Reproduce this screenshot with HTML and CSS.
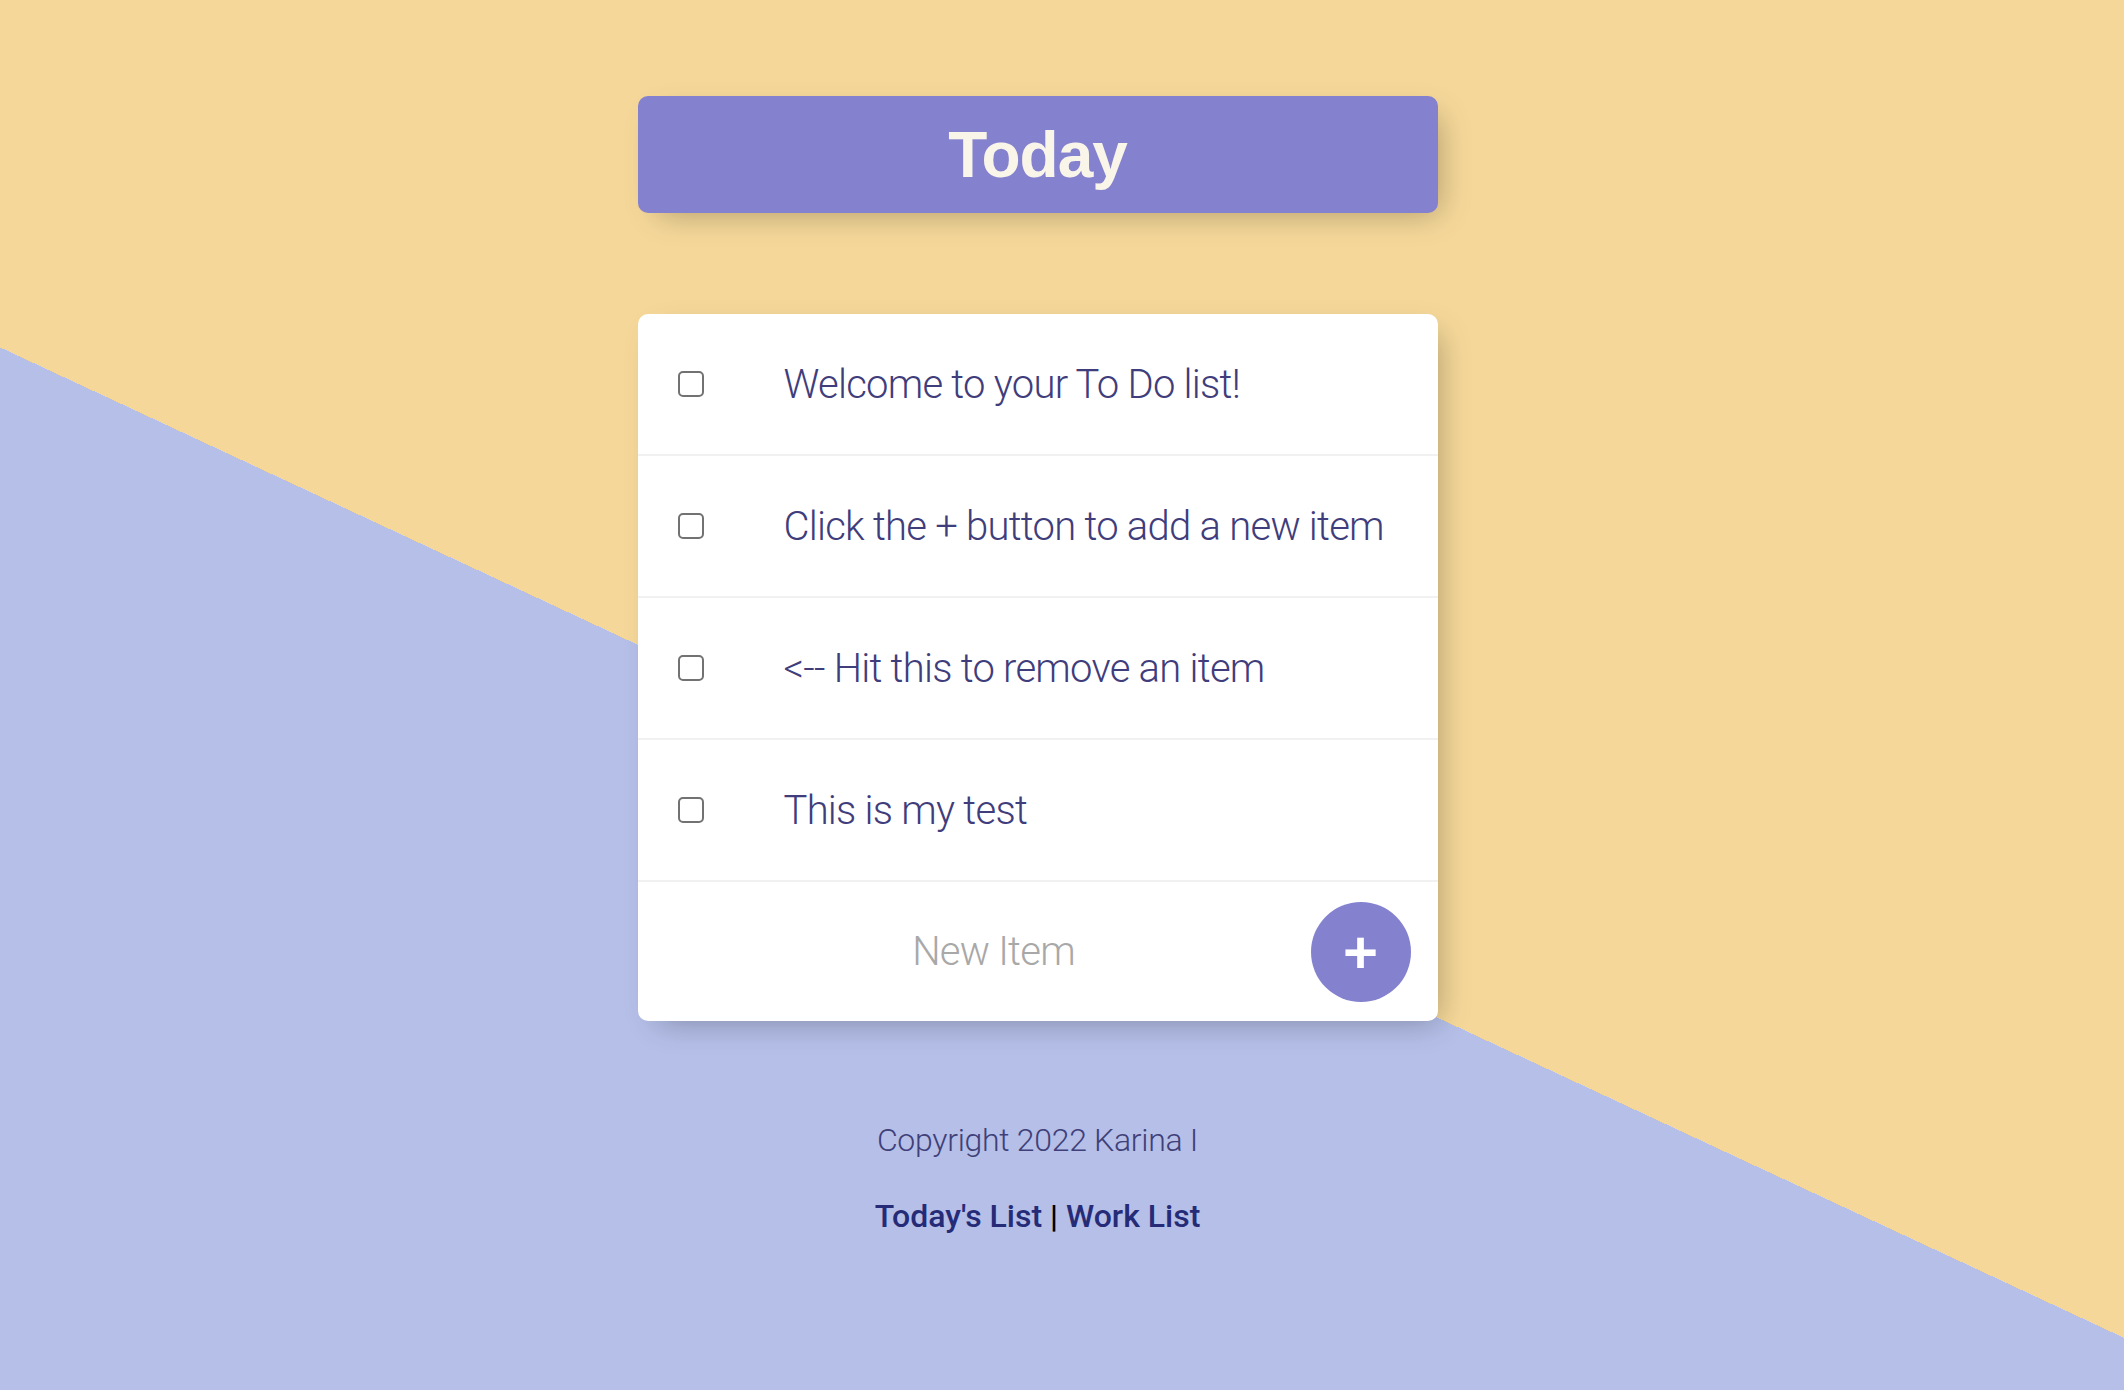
FILE: index.html
```html
<!DOCTYPE html>
<html lang="en">
<head>
<meta charset="utf-8">
<title>To Do List</title>
<link rel="stylesheet" href="styles.css">
</head>
<body>
<div class="page">
  <div class="box heading-box">
    <h1>Today</h1>
  </div>
  <div class="box card">
    <div class="item"><input type="checkbox" class="check"><p class="item-text">Welcome to your To Do list!</p></div>
    <div class="item"><input type="checkbox" class="check"><p class="item-text">Click the + button to add a new item</p></div>
    <div class="item"><input type="checkbox" class="check"><p class="item-text">&lt;-- Hit this to remove an item</p></div>
    <div class="item"><input type="checkbox" class="check"><p class="item-text">This is my test</p></div>
    <form class="new-item" action="#">
      <input type="text" class="new-input" name="newItem" placeholder="New Item" autocomplete="off">
      <button type="button" class="add-btn">+</button>
    </form>
  </div>
  <footer class="footer">
    <p class="copy">Copyright 2022 Karina I</p>
    <p class="links"><a href="#" class="link">Today's List</a> | <a href="#" class="link">Work List</a></p>
  </footer>
</div>
</body>
</html>
```
FILE: styles.css
```css
html, body {
  margin: 0;
  padding: 0;
}

body {
  font-family: Roboto, "Liberation Sans", Arial, sans-serif;
}

.page {
  min-height: 100vh;
  box-sizing: border-box;
  padding: 96px 49px 0 0;
  display: flex;
  flex-direction: column;
  align-items: center;
  background-color: #b5bfe8;
  background-image: linear-gradient(25deg, #b5bfe8 43.8%, #f5d899 43.8%);
}

.box {
  width: 800px;
  border-radius: 10px;
  box-shadow: 10px 10px 30px -10px rgba(0, 0, 0, 0.3);
}

.heading-box {
  height: 117px;
  background: #8481cf;
  display: flex;
  align-items: center;
  justify-content: center;
}

.heading-box h1 {
  margin: 0;
  font-family: "Liberation Sans", Arial, sans-serif;
  font-weight: 700;
  font-size: 64px;
  letter-spacing: -1px;
  color: #f9f5e9;
  line-height: 1;
}

.card {
  margin-top: 101px;
  background: #fff;
  overflow: hidden;
}

.item {
  height: 140px;
  display: flex;
  align-items: center;
  border-bottom: 2px solid #f1f1f1;
}

.check {
  appearance: none;
  -webkit-appearance: none;
  width: 26px;
  height: 26px;
  margin: 0 40px;
  box-sizing: border-box;
  border: 2px solid #727272;
  border-radius: 5px;
  background: #fff;
  flex: none;
}

.item-text {
  margin: 0;
  padding: 0 40px;
  font-size: 40px;
  font-weight: 300;
  letter-spacing: -0.75px;
  color: #3f3d7b;
  white-space: nowrap;
}

.new-item {
  height: 139px;
  display: flex;
  align-items: center;
  margin: 0;
}

.new-input {
  margin-left: 66px;
  width: 580px;
  height: 120px;
  border: none;
  padding: 0;
  text-align: center;
  font-family: Roboto, "Liberation Sans", Arial, sans-serif;
  font-size: 40px;
  font-weight: 300;
  letter-spacing: -0.75px;
  color: #3f3d7b;
  background: transparent;
  outline: none;
}

.new-input::placeholder {
  color: #a8a8a8;
  opacity: 1;
}

.add-btn {
  margin-left: 27px;
  width: 100px;
  height: 100px;
  border: 0;
  border-radius: 50%;
  background: #8481cf;
  color: #fff;
  font-family: "Liberation Sans", Arial, sans-serif;
  font-weight: 700;
  font-size: 60px;
  line-height: 1;
  padding: 2px 0 0;
  display: flex;
  align-items: center;
  justify-content: center;
  flex: none;
}

.footer {
  margin-top: 100px;
  text-align: center;
}

.copy {
  margin: 0;
  font-size: 32px;
  font-weight: 300;
  letter-spacing: -0.3px;
  line-height: 38px;
  color: #403f78;
}

.links {
  margin: 38px 0 0;
  font-family: Roboto, "Liberation Sans", Arial, sans-serif;
  font-size: 32px;
  font-weight: 500;
  line-height: 38px;
  color: #000;
}

.link {
  color: #262b77;
  text-decoration: none;
}
```
